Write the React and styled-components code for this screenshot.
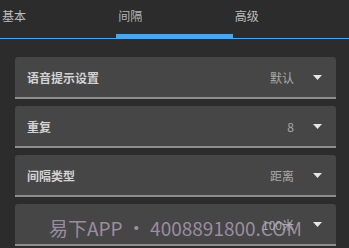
import React, { useState } from 'react'
import styled, { createGlobalStyle } from 'styled-components'

const GlobalStyle = createGlobalStyle`
  html, body {
    margin: 0;
    padding: 0;
    background: #2c2c2c;
    font-family: "Noto Sans CJK SC", "Noto Sans", sans-serif;
  }
`

const tabs = ['基本', '间隔', '高级']

const rows = [
  { label: '语音提示设置', value: '默认' },
  { label: '重复', value: '8' },
  { label: '间隔类型', value: '距离' },
  { label: '', value: '100米' }
]

const App = () => {
  const [active, setActive] = useState(1)

  return (
    <PageContainer>
      <GlobalStyle />
      <TabBar>
        {tabs.map((t, i) => (
          <Tab key={t} active={i === active} onClick={() => setActive(i)}>
            {t}
          </Tab>
        ))}
      </TabBar>
      <List>
        {rows.map((r, i) => (
          <Row key={i}>
            <Label>{r.label}</Label>
            <Value>{r.value}</Value>
            <Caret viewBox='0 0 9 5'>
              <path d='M0 0 L9 0 L4.5 5 Z' fill='#e6e6e6' />
            </Caret>
          </Row>
        ))}
      </List>
      <Watermark>易下APP • 4008891800.COM</Watermark>
    </PageContainer>
  )
}

export default App

const PageContainer = styled.div`
  position: relative;
  width: 349px;
  height: 248px;
  overflow: hidden;
  background: #2c2c2c;
`

const TabBar = styled.div`
  display: flex;
  height: 39px;
  margin-bottom: 18px;
`

const Tab = styled.div`
  flex: 1;
  box-sizing: border-box;
  padding: 8px 0 0 2px;
  font-size: 12px;
  line-height: 16px;
  color: ${p => (p.active ? '#b4b4b4' : '#bdbdbd')};
  border-bottom: ${p => (p.active ? '5px' : '1px')} solid #4ba6ee;
  cursor: pointer;
`

const List = styled.div`
  display: flex;
  flex-direction: column;
  gap: 7px;
  padding: 0 13px 0 15px;
`

const Row = styled.div`
  display: flex;
  align-items: center;
  height: 40px;
  padding: 0 14px 0 12px;
  background: #464646;
  border-radius: 3px 3px 0 0;
  border-bottom: 2px solid #8e8e8e;
`

const Label = styled.div`
  flex: 1;
  font-size: 12px;
  font-weight: 700;
  color: #d2d2d2;
`

const Value = styled.div`
  font-size: 12px;
  color: #a8a8a8;
  margin-right: 19px;
`

const Caret = styled.svg`
  width: 9px;
  height: 5px;
`

const Watermark = styled.div`
  position: absolute;
  left: 49px;
  top: 215px;
  font-family: "Noto Sans CJK SC", "Noto Sans", sans-serif;
  font-size: 19px;
  line-height: 26px;
  color: rgba(190, 170, 200, 0.72);
  white-space: nowrap;
  pointer-events: none;
`
